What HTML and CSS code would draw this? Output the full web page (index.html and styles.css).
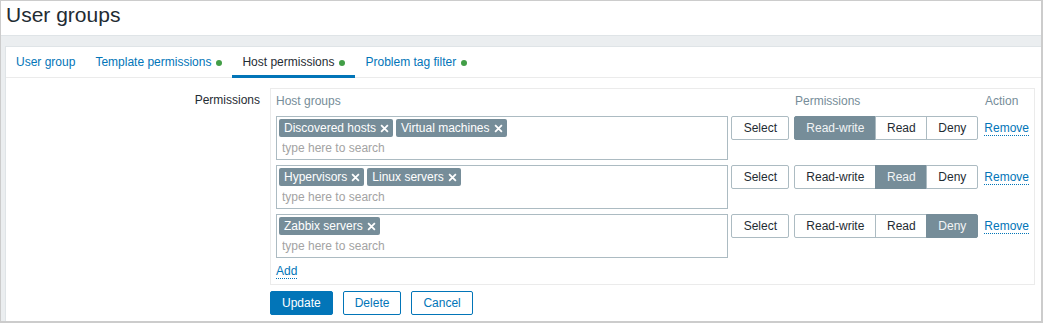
FILE: index.html
```html
<!DOCTYPE html>
<html lang="en">
<head>
    <meta charset="UTF-8">
    <title>User groups</title>
    <link rel="stylesheet" href="styles.css">
</head>
<body>
    <div class="page">
        <header class="page-header">
            <h1>User groups</h1>
        </header>

        <main class="content">
            <!-- Tabs -->
            <ul class="tabs">
                <li class="tab"><a href="#">User group</a></li>
                <li class="tab"><a href="#">Template permissions<span class="dot"></span></a></li>
                <li class="tab active"><a href="#">Host permissions<span class="dot"></span></a></li>
                <li class="tab"><a href="#">Problem tag filter<span class="dot"></span></a></li>
            </ul>

            <form class="form">
                <div class="form-row">
                    <label class="form-label">Permissions</label>
                    <div class="form-field">
                        <div class="perm-head">
                            <div class="col-groups">Host groups</div>
                            <div class="col-select"></div>
                            <div class="col-perm">Permissions</div>
                            <div class="col-action">Action</div>
                        </div>

                        <div class="perm-row">
                            <div class="multiselect col-groups">
                                <div class="tags">
                                    <span class="tag">Discovered hosts<svg class="tag-x" viewBox="0 0 8 8"><path d="M1 1L7 7M7 1L1 7"/></svg></span>
                                    <span class="tag">Virtual machines<svg class="tag-x" viewBox="0 0 8 8"><path d="M1 1L7 7M7 1L1 7"/></svg></span>
                                </div>
                                <input class="search" type="text" placeholder="type here to search">
                            </div>
                            <button type="button" class="btn-grey col-select">Select</button>
                            <div class="radio col-perm">
                                <span class="radio-item checked">Read-write</span>
                                <span class="radio-item">Read</span>
                                <span class="radio-item">Deny</span>
                            </div>
                            <div class="col-action"><a href="#" class="link">Remove</a></div>
                        </div>

                        <div class="perm-row">
                            <div class="multiselect col-groups">
                                <div class="tags">
                                    <span class="tag">Hypervisors<svg class="tag-x" viewBox="0 0 8 8"><path d="M1 1L7 7M7 1L1 7"/></svg></span>
                                    <span class="tag">Linux servers<svg class="tag-x" viewBox="0 0 8 8"><path d="M1 1L7 7M7 1L1 7"/></svg></span>
                                </div>
                                <input class="search" type="text" placeholder="type here to search">
                            </div>
                            <button type="button" class="btn-grey col-select">Select</button>
                            <div class="radio col-perm">
                                <span class="radio-item">Read-write</span>
                                <span class="radio-item checked">Read</span>
                                <span class="radio-item">Deny</span>
                            </div>
                            <div class="col-action"><a href="#" class="link">Remove</a></div>
                        </div>

                        <div class="perm-row">
                            <div class="multiselect col-groups">
                                <div class="tags">
                                    <span class="tag">Zabbix servers<svg class="tag-x" viewBox="0 0 8 8"><path d="M1 1L7 7M7 1L1 7"/></svg></span>
                                </div>
                                <input class="search" type="text" placeholder="type here to search">
                            </div>
                            <button type="button" class="btn-grey col-select">Select</button>
                            <div class="radio col-perm">
                                <span class="radio-item">Read-write</span>
                                <span class="radio-item">Read</span>
                                <span class="radio-item checked">Deny</span>
                            </div>
                            <div class="col-action"><a href="#" class="link">Remove</a></div>
                        </div>

                        <div class="perm-add"><a href="#" class="link">Add</a></div>
                    </div>
                </div>

                <div class="form-actions">
                    <button type="button" class="btn btn-primary">Update</button>
                    <button type="button" class="btn btn-alt">Delete</button>
                    <button type="button" class="btn btn-alt">Cancel</button>
                </div>
            </form>
        </main>
    </div>
</body>
</html>
```

FILE: styles.css
```css
* {
    box-sizing: border-box;
}

body {
    margin: 0;
    font-family: "Liberation Sans", Arial, sans-serif;
    font-size: 12px;
    line-height: 14px;
    color: #1f2c33;
    background-color: #fff;
}

.page {
    width: 1043px;
    height: 323px;
    border: 1px solid #cccccc;
    border-right-width: 2px;
    border-bottom-width: 2px;
    background-color: #ebeef0;
    display: flex;
    flex-direction: column;
}

.page-header {
    height: 35px;
    background-color: #fff;
    border-bottom: 1px solid #dfe4e7;
}

.page-header h1 {
    margin: 0;
    padding: 2px 0 0 5px;
    font-size: 21px;
    line-height: 24px;
    font-weight: normal;
}

.content {
    flex: 1;
    margin: 10px 0 0 4px;
    background-color: #fff;
    border-top: 1px solid #dfe4e7;
    border-left: 1px solid #dfe4e7;
}

/* Tabs */
.tabs {
    display: flex;
    list-style: none;
    margin: 0;
    padding: 0;
    border-bottom: 1px solid #ebebeb;
}

.tab {
    height: 31px;
    margin-bottom: -1px;
    border-bottom: 3px solid transparent;
}

.tab a {
    display: flex;
    align-items: center;
    height: 28px;
    padding: 2px 10px 0;
    color: #0275b8;
    text-decoration: none;
    white-space: nowrap;
}

.tab.active {
    border-bottom-color: #0275b8;
}

.tab.active a {
    color: #1f2c33;
}

.dot {
    width: 6px;
    height: 6px;
    margin: 1px 0 0 5px;
    border-radius: 50%;
    background-color: #429e47;
}

/* Form */
.form {
    padding-top: 10px;
}

.form-row {
    display: flex;
    align-items: flex-start;
}

.form-label {
    width: 254px;
    margin-right: 10px;
    padding-top: 5px;
    text-align: right;
}

.form-field {
    width: 765px;
    padding: 5px;
    border: 1px solid #ebebeb;
}

.perm-head,
.perm-row {
    display: flex;
    align-items: flex-start;
}

.perm-head {
    height: 14px;
    margin-bottom: 8px;
    color: #768d99;
}

.perm-row {
    margin-bottom: 5px;
}

.col-groups {
    width: 453px;
    margin-right: 3px;
}

.col-select {
    width: 58px;
    margin-right: 5px;
}

.col-perm {
    width: 184px;
    margin-right: 6px;
}

.col-action {
    line-height: 24px;
}

.perm-head .col-action {
    line-height: 14px;
}

/* Multiselect */
.multiselect {
    height: 44px;
    border: 1px solid #acbbc2;
    background-color: #fff;
}

.tags {
    display: flex;
    gap: 3px;
    padding: 2px 0 0 2px;
}

.tag {
    display: flex;
    align-items: center;
    height: 18px;
    padding: 0 4px 0 5px;
    border-radius: 2px;
    background-color: #768d99;
    color: #fff;
    line-height: 18px;
    white-space: nowrap;
}

.tag-x {
    width: 9px;
    height: 9px;
    margin-left: 4px;
    fill: none;
    stroke: #fff;
    stroke-width: 1.6;
}

.search {
    display: block;
    width: 100%;
    height: 20px;
    padding: 1px 0 0 5px;
    border: none;
    outline: none;
    font: inherit;
    color: #1f2c33;
    background: transparent;
}

.search::placeholder {
    color: #a3a3a3;
}

/* Buttons */
.btn-grey {
    height: 24px;
    padding: 0;
    border: 1px solid #acbbc2;
    border-radius: 2px;
    background-color: #fff;
    font: inherit;
    color: #1f2c33;
}

.radio {
    display: flex;
    height: 24px;
}

.radio-item {
    height: 24px;
    padding: 0;
    border: 1px solid #acbbc2;
    line-height: 22px;
    text-align: center;
    white-space: nowrap;
}

.radio-item:nth-child(1) {
    width: 82px;
    border-radius: 2px 0 0 2px;
}

.radio-item:nth-child(2) {
    width: 52px;
    margin-left: -1px;
}

.radio-item:nth-child(3) {
    width: 52px;
    margin-left: -1px;
    border-radius: 0 2px 2px 0;
}

.radio-item.checked {
    background-color: #768d99;
    border-color: #768d99;
    color: #f2f4f5;
}

.link {
    color: #0275b8;
    text-decoration: none;
    border-bottom: 1px dotted #0275b8;
}

.perm-add {
    padding: 1px 0 1px;
}

.form-actions {
    display: flex;
    gap: 10px;
    margin: 6px 0 0 264px;
}

.btn {
    height: 24px;
    padding: 0 11px;
    border: 1px solid #0275b8;
    border-radius: 2px;
    font: inherit;
}

.btn-primary {
    background-color: #0275b8;
    color: #fff;
}

.btn-alt {
    background-color: #fff;
    color: #0275b8;
}
```
